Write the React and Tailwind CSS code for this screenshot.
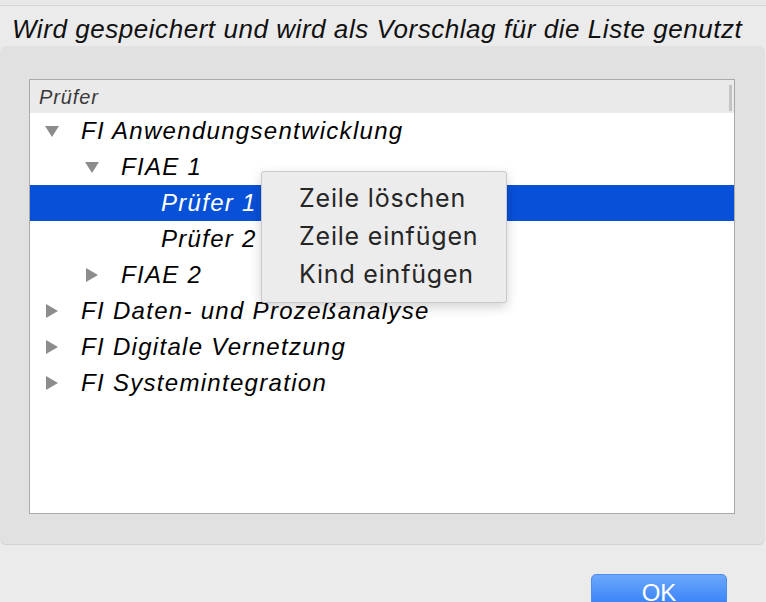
const rows = [
  { label: 'FI Anwendungsentwicklung', level: 0, toggle: 'open' },
  { label: 'FIAE 1', level: 1, toggle: 'open' },
  { label: 'Prüfer 1', level: 2, selected: true },
  { label: 'Prüfer 2', level: 2 },
  { label: 'FIAE 2', level: 1, toggle: 'closed' },
  { label: 'FI Daten- und Prozeßanalyse', level: 0, toggle: 'closed' },
  { label: 'FI Digitale Vernetzung', level: 0, toggle: 'closed' },
  { label: 'FI Systemintegration', level: 0, toggle: 'closed' },
]

const menuItems = ['Zeile löschen', 'Zeile einfügen', 'Kind einfügen']

function Toggle({ state }) {
  if (state === 'open') {
    return (
      <svg width="16" height="14" viewBox="0 0 16 14">
        <polygon points="1,2 15,2 8,13" fill="#8c8c8c" />
      </svg>
    )
  }
  return (
    <svg width="16" height="16" viewBox="0 0 16 16">
      <polygon points="2,1 14,8 2,15" fill="#8c8c8c" />
    </svg>
  )
}

function TreeRow({ row }) {
  const indent = ['pl-[14px]', 'pl-[54px]', 'pl-[94px]'][row.level]
  return (
    <div
      className={`flex h-[36px] items-center ${indent} ${
        row.selected ? 'bg-[#0750d8] text-white' : 'text-black'
      }`}
    >
      <span className="flex w-[37px] shrink-0 items-center">
        {row.toggle ? <Toggle state={row.toggle} /> : null}
      </span>
      <span className="whitespace-nowrap text-[24px] italic leading-none tracking-[1.3px]">{row.label}</span>
    </div>
  )
}

export default function App() {
  return (
    <div
      className="flex h-[602px] w-[766px] flex-col overflow-hidden bg-[#ebebeb]"
      style={{ fontFamily: '"Liberation Sans", Arial, sans-serif' }}
    >
      <div className="h-[6px] shrink-0 border-b border-[#d6d6d6] bg-[#e8e8e8]" />

      <div className="flex h-[40px] shrink-0 items-center pl-[12px] pt-[6px]">
        <p className="whitespace-nowrap text-[26px] italic leading-none tracking-[0.55px] text-[#111]">
          Wird gespeichert und wird als Vorschlag für die Liste genutzt
        </p>
      </div>

      <div className="mr-[1px] h-[499px] shrink-0 rounded-md border-b border-[#d2d2d2] bg-[#e1e1e1] px-[29px] pb-[30px] pt-[33px]">
        <div className="relative h-full w-[706px] border border-[#a9a9a9] bg-white">
          <div className="flex h-[33px] items-center justify-between bg-[#eaeaea] pl-[9px] pr-[2px]">
            <span className="text-[20px] italic tracking-[0.9px] text-[#3a3a3a]">Prüfer</span>
            <span className="mb-[2px] h-[26px] w-[3px] self-end bg-[#c4c4c4]" />
          </div>

          {rows.map((row) => (
            <TreeRow key={row.label} row={row} />
          ))}

          <div
            className="absolute left-[231px] top-[91px] w-[246px] rounded-[3px] border border-[#cacaca] bg-[#ececec] py-[8px] pl-[37px] shadow-[0_4px_12px_rgba(0,0,0,0.18)]"
            style={{ fontFamily: 'Inter, "Liberation Sans", sans-serif' }}
          >
            {menuItems.map((item) => (
              <div key={item} className="flex h-[38px] items-center text-[25px] tracking-[0.8px] text-[#262626]">
                {item}
              </div>
            ))}
          </div>
        </div>
      </div>

      <div className="flex flex-1 justify-end pr-[39px] pt-[29px]">
        <button
          type="button"
          className="h-[40px] w-[136px] rounded-[5px] border border-[#4a8df0] bg-gradient-to-b from-[#6ca7fb] to-[#2477f7] pb-[6px] text-[24px] text-white"
        >
          OK
        </button>
      </div>
    </div>
  )
}
